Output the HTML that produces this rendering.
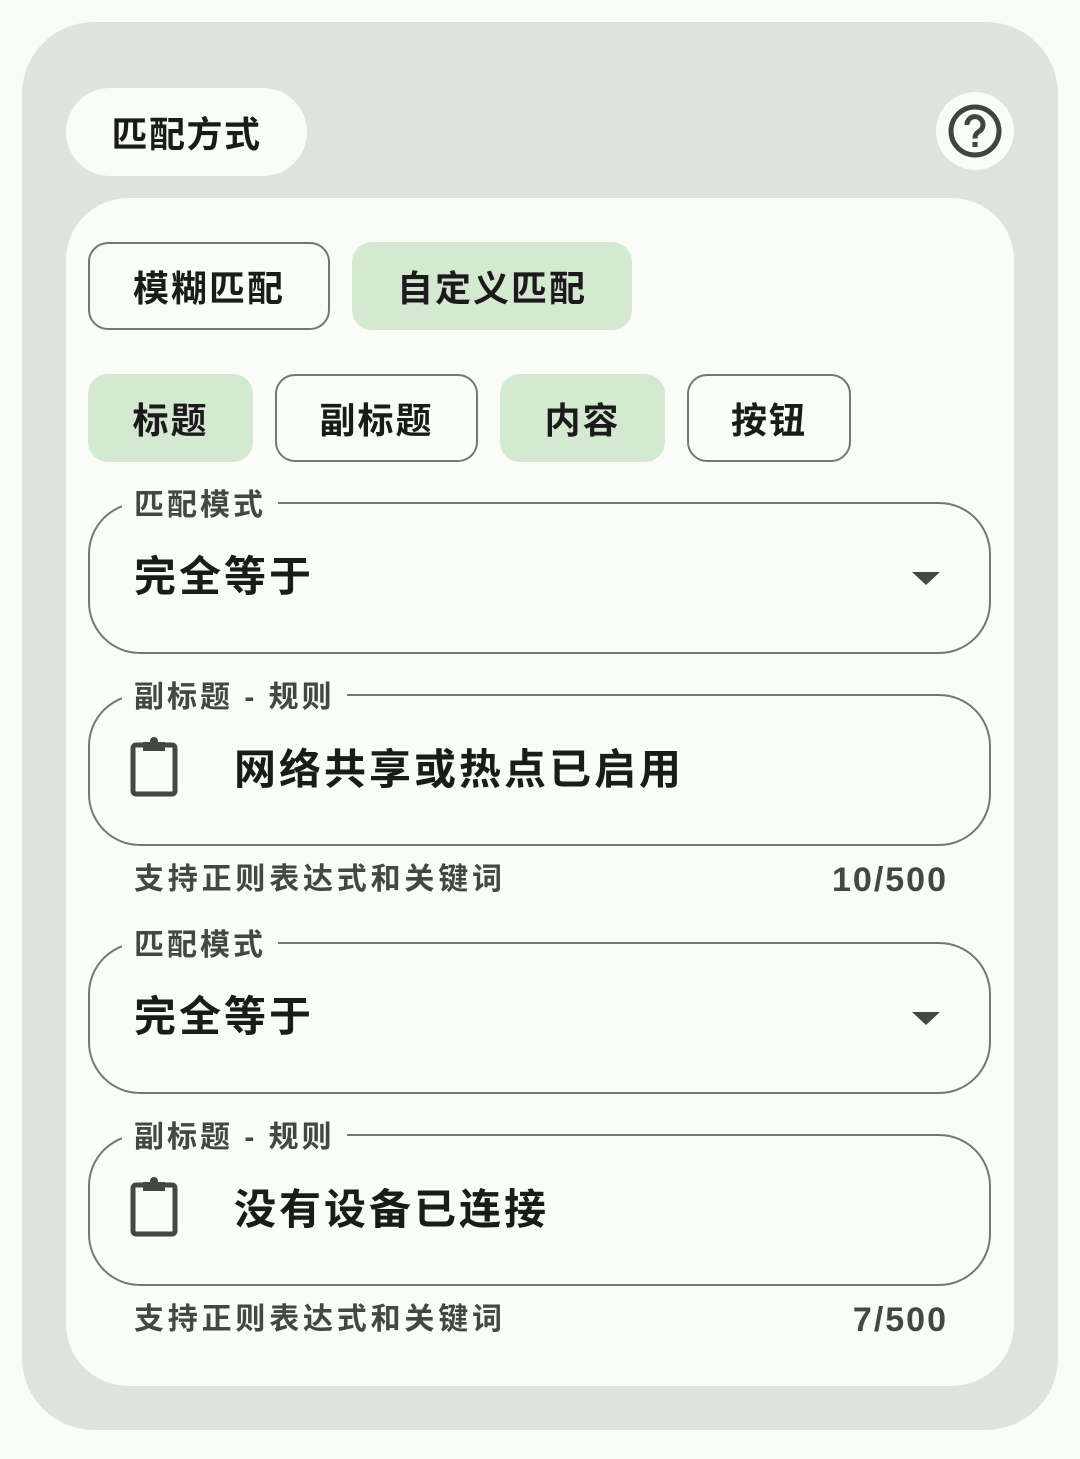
<!DOCTYPE html>
<html><head><meta charset="utf-8"><style>
*{margin:0;padding:0;box-sizing:border-box}
body{width:1080px;height:1459px;background:#fafcf6;font-family:"Liberation Sans","Noto Sans CJK SC",sans-serif;position:relative;overflow:hidden;color:#1a1c19}
.abs{position:absolute}
.outer{left:22px;top:22px;width:1036px;height:1408px;background:#dee3dc;border-radius:72px}
.pill{left:66px;top:88px;width:241px;height:88px;background:#fafcf6;border-radius:44px;font-size:36px;font-weight:700;display:flex;align-items:center;justify-content:center;letter-spacing:1.5px}
.help{left:936px;top:92px;width:78px;height:78px;border-radius:50%;background:#fafcf6}
.inner{left:66px;top:198px;width:948px;height:1188px;background:#fafcf6;border-radius:62px}
.chip{height:88px;border-radius:20px;font-size:36px;font-weight:700;display:flex;align-items:center;justify-content:center;letter-spacing:2px}
.o{border:2.5px solid #737971}
.f{background:#d5e8d2}
.field{left:88px;width:903px;height:152px;border:2.5px solid #737971;border-radius:52px}
.lab{font-size:30px;font-weight:700;color:#424940;background:#fafcf6;padding:0 12px;line-height:34px;letter-spacing:3px}
.val{font-size:42px;font-weight:700;line-height:50px;letter-spacing:3px}
.help2{font-size:30px;font-weight:700;color:#424940;line-height:34px;letter-spacing:3.8px}
.cnt{font-size:34px;font-weight:700;color:#424940;line-height:34px;letter-spacing:2px}
</style></head><body>
<div class="abs outer"></div>
<div class="abs pill">匹配方式</div>
<div class="abs help"><svg width="78" height="78" viewBox="0 0 78 78"><circle cx="39" cy="39" r="24" fill="none" stroke="#3f4540" stroke-width="5"/><path d="M31 33a8 8 0 1 1 12 6.5c-3 2-4 3.5-4 7" fill="none" stroke="#3f4540" stroke-width="5"/><rect x="36.5" y="50" width="5" height="5" fill="#3f4540"/></svg></div>
<div class="abs inner"></div>
<div class="abs chip o" style="left:88px;top:242px;width:242px">模糊匹配</div>
<div class="abs chip f" style="left:352px;top:242px;width:280px">自定义匹配</div>
<div class="abs chip f" style="left:88px;top:374px;width:165px">标题</div>
<div class="abs chip o" style="left:275px;top:374px;width:203px">副标题</div>
<div class="abs chip f" style="left:500px;top:374px;width:165px">内容</div>
<div class="abs chip o" style="left:687px;top:374px;width:164px">按钮</div>

<div class="abs field" style="top:502px"></div>
<div class="abs lab" style="left:122px;top:489px">匹配模式</div>
<div class="abs val" style="left:134px;top:552px">完全等于</div>
<svg class="abs" style="left:912px;top:570px" width="28" height="16"><path d="M0 2H28L14 15Z" fill="#424940"/></svg>

<div class="abs field" style="top:694px"></div>
<div class="abs lab" style="left:122px;top:681px">副标题 - 规则</div>
<svg class="abs" style="left:128px;top:736px" width="52" height="62" viewBox="0 0 52 62"><rect x="5" y="9" width="42" height="49" rx="3" fill="none" stroke="#424940" stroke-width="5"/><rect x="15" y="6" width="22" height="9" fill="#424940"/><circle cx="26" cy="5" r="4" fill="#424940"/></svg>
<div class="abs val" style="left:234px;top:745px">网络共享或热点已启用</div>
<div class="abs help2" style="left:134px;top:863px">支持正则表达式和关键词</div>
<div class="abs cnt" style="right:132px;top:863px">10/500</div>

<div class="abs field" style="top:942px"></div>
<div class="abs lab" style="left:122px;top:929px">匹配模式</div>
<div class="abs val" style="left:134px;top:992px">完全等于</div>
<svg class="abs" style="left:912px;top:1010px" width="28" height="16"><path d="M0 2H28L14 15Z" fill="#424940"/></svg>

<div class="abs field" style="top:1134px"></div>
<div class="abs lab" style="left:122px;top:1121px">副标题 - 规则</div>
<svg class="abs" style="left:128px;top:1176px" width="52" height="62" viewBox="0 0 52 62"><rect x="5" y="9" width="42" height="49" rx="3" fill="none" stroke="#424940" stroke-width="5"/><rect x="15" y="6" width="22" height="9" fill="#424940"/><circle cx="26" cy="5" r="4" fill="#424940"/></svg>
<div class="abs val" style="left:234px;top:1185px">没有设备已连接</div>
<div class="abs help2" style="left:134px;top:1303px">支持正则表达式和关键词</div>
<div class="abs cnt" style="right:132px;top:1303px">7/500</div>
</body></html>
